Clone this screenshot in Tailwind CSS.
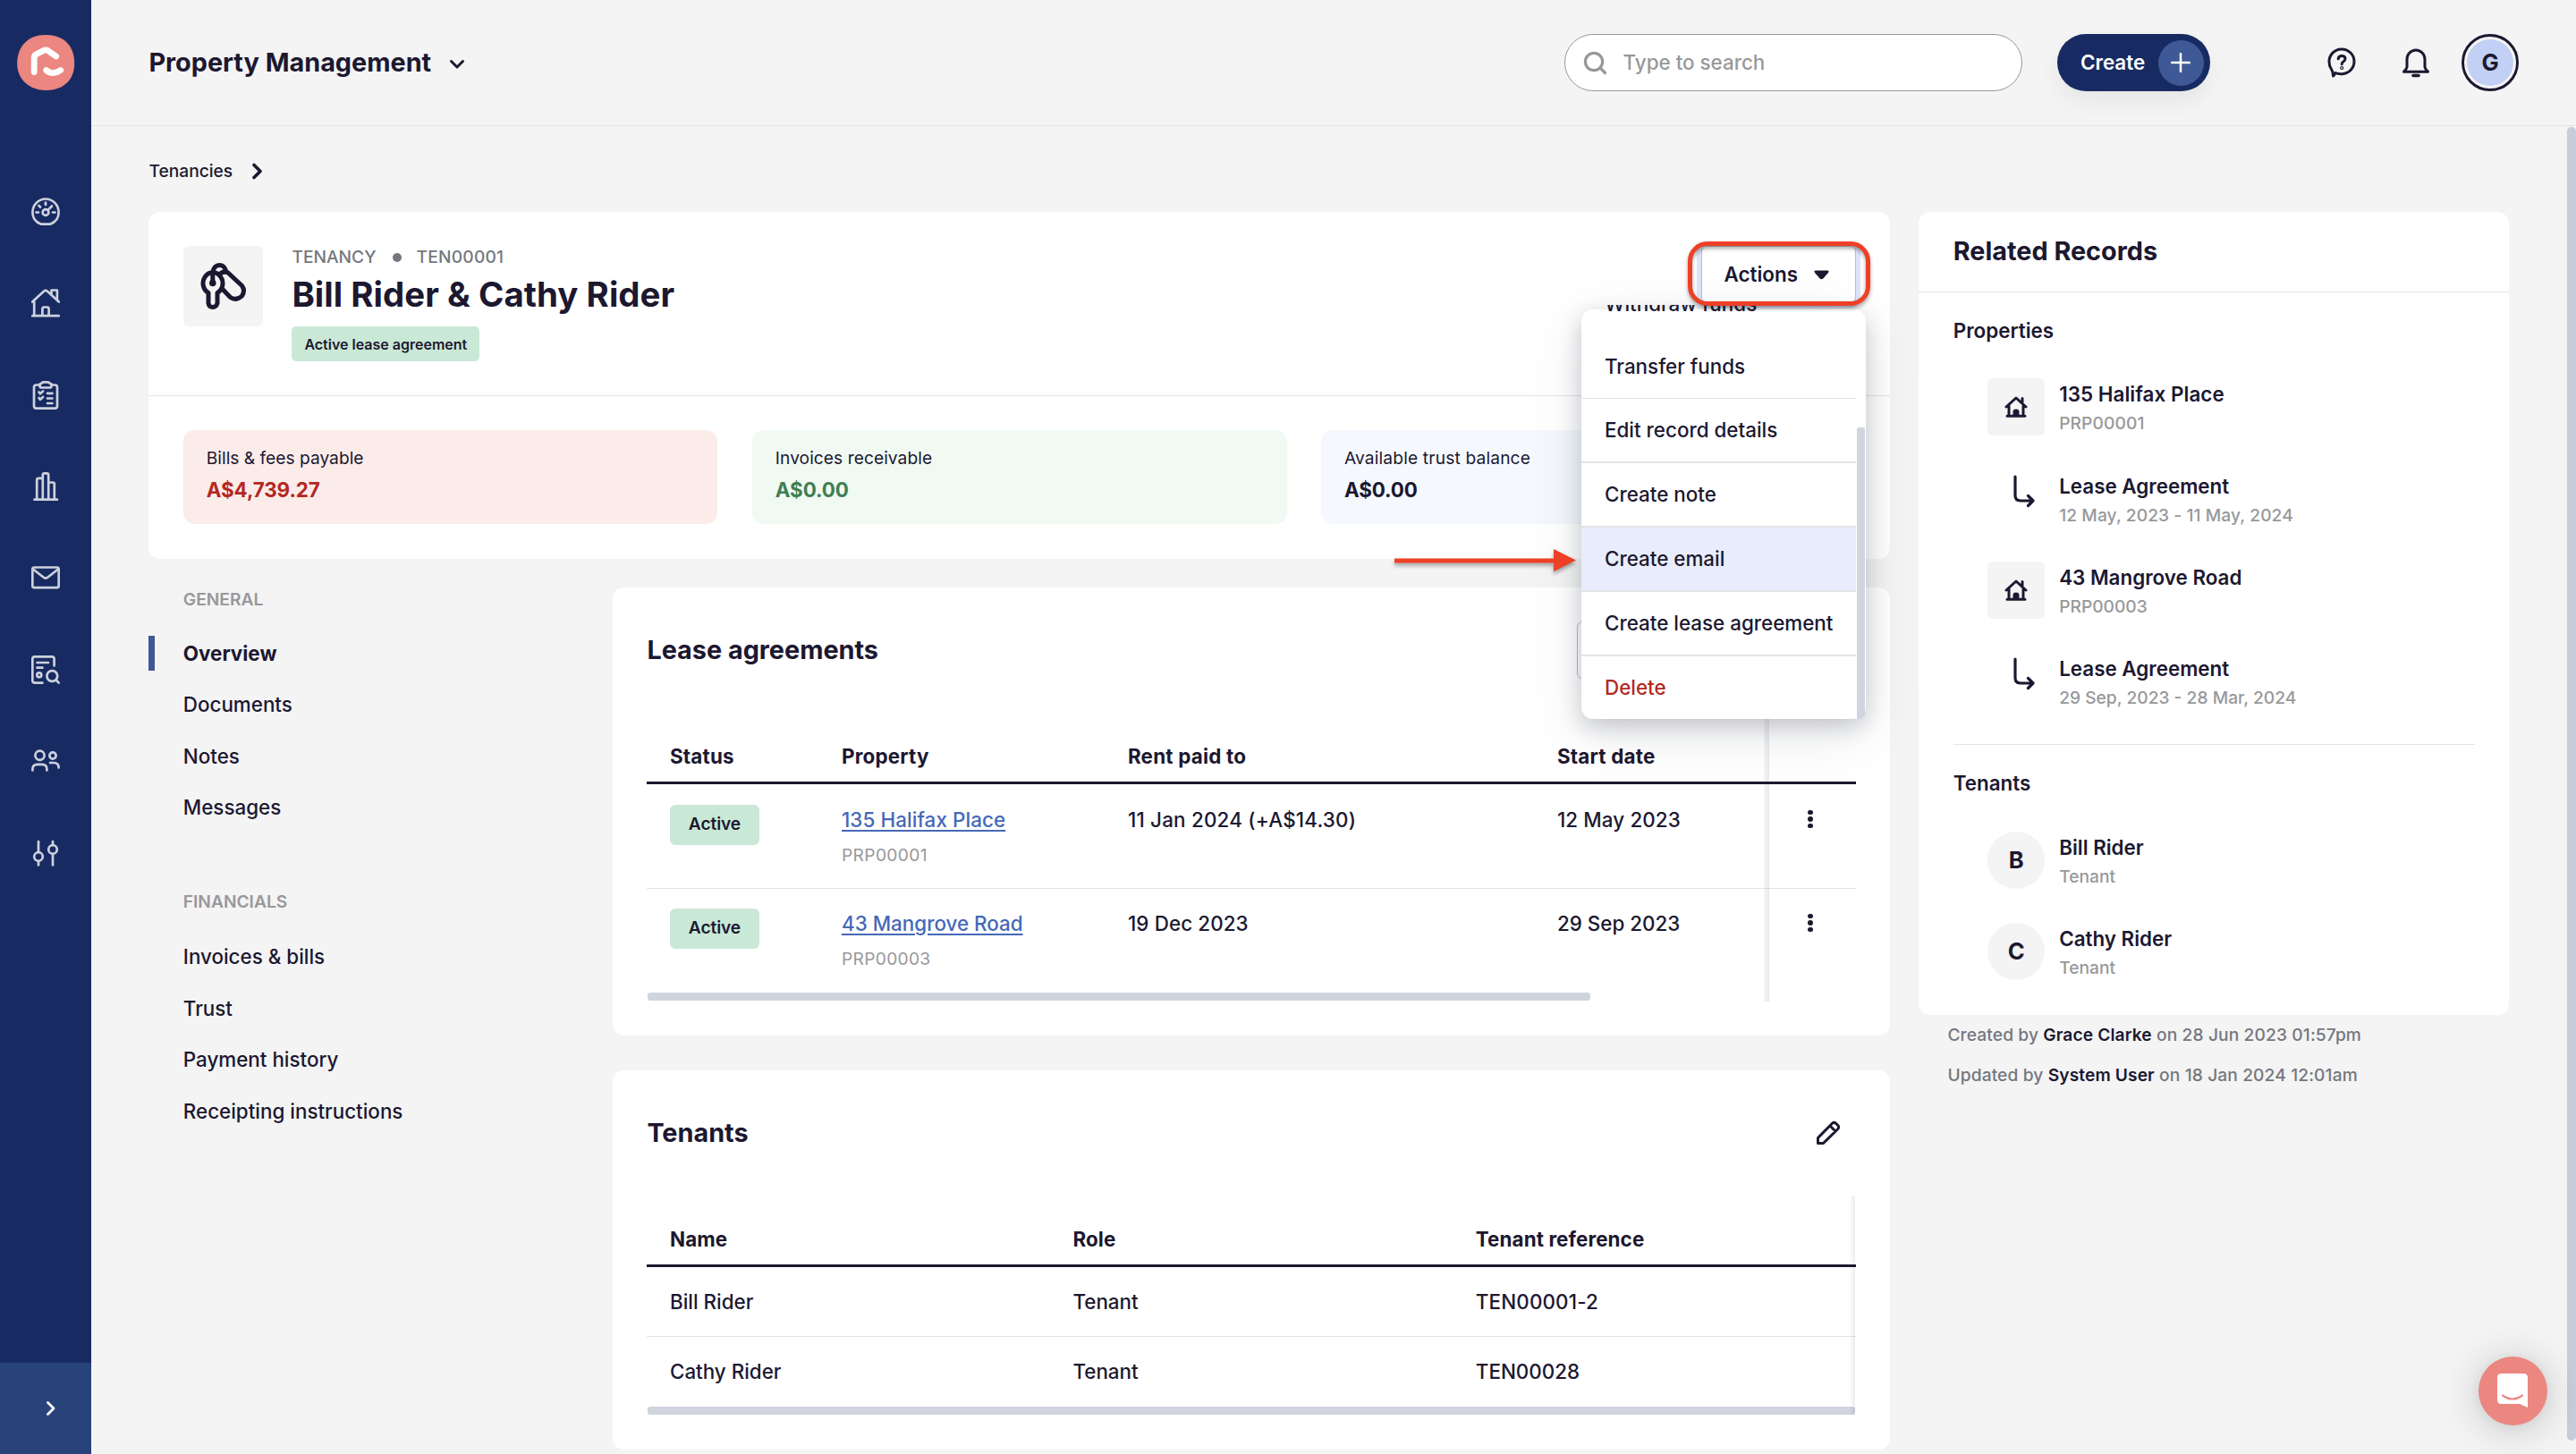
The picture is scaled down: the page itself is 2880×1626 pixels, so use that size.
<!DOCTYPE html>
<html lang="en" class="text-[25.6px]">
<head>
<meta charset="utf-8">
<title>Property Management</title>
<script src="https://cdn.jsdelivr.net/npm/@tailwindcss/browser@4"></script>
</head>
<body class="relative flex h-[1626px] w-[2880px] overflow-hidden bg-[#f4f4f4] font-['Inter',sans-serif] text-[#1c1830]">

<!-- Sidebar -->
<aside class="flex h-full w-16 shrink-0 flex-col bg-[#172b62]">
  <div class="flex h-29 justify-center pt-[39px]">
    <svg class="h-[62px] w-16" viewBox="0 0 64 62" fill="none">
      <path d="M32 0C52 0 64 12 64 32C64 50 52 62 32 62C14 62 0 50 0 32C0 13 12 0 32 0Z" fill="#eb8681"/>
      <path d="M19 41.500V26Q19 23 21.500 21.500L29.500 17.500Q32 16.300 34.500 17.700L43.500 24" stroke="#fff" stroke-width="6.800" stroke-linecap="round" stroke-linejoin="round"/>
      <path d="M32.500 39.500Q36 43 41 42.500Q45 42 48.500 39.500" stroke="#fff" stroke-width="6.800" stroke-linecap="round"/>
    </svg>
  </div>
  <nav class="flex flex-col pr-px text-[#cdd1dd]">
    <a class="flex h-16 items-center justify-center">
      <svg class="size-[32px]" viewBox="0 0 32 32" fill="none" stroke="currentColor" stroke-width="2.700" stroke-linecap="round">
        <path d="M11 29.700C5 27.500 1.400 22.500 1.400 16.500A14.600 15 0 0 1 30.600 16.500C30.600 22.500 27 27.500 21 29.700Z" stroke-linejoin="round"/>
        <circle cx="16" cy="16.500" r="3.400"/><path d="M18.600 13.900L23 9.500M16 5.500V8M5.500 16.500H8M24 16.500H26.500M8.500 9L10 10.500"/>
      </svg>
    </a>
    <a class="flex h-16 items-center justify-center">
      <svg class="size-[32px]" viewBox="0 0 32 32" fill="none" stroke="currentColor" stroke-width="2.700" stroke-linecap="round" stroke-linejoin="round">
        <path d="M1.200 14.500L14 2.700Q16 1 18 2.700L30.800 14.500M3.200 13.500V30M28.900 13V1.500H22.500V6.500M1.300 30.200H30.700M12.400 30V22.500Q12.400 20.500 14.400 20.500H17.600Q19.600 20.500 19.600 22.500V30"/>
      </svg>
    </a>
    <a class="flex h-16 items-center justify-center">
      <svg class="size-[32px]" viewBox="0 0 32 32" fill="none" stroke="currentColor" stroke-width="2.700" stroke-linecap="round" stroke-linejoin="round">
        <path d="M9 4.500H5.500Q3 4.500 3 7V28Q3 30.600 5.500 30.600H26.500Q29 30.600 29 28V7Q29 4.500 26.500 4.500H23"/>
        <path d="M9.500 4Q9.500 3 11 3Q12 1.300 14 1.300H18Q20 1.300 21 3Q22.500 3 22.500 4V5.500Q22.500 7.500 20.500 7.500H11.500Q9.500 7.500 9.500 5.500Z"/>
        <path d="M8.500 12.500L10 14.300L13 11.500M8.500 19L10 20.800L13 18M18 13.800H23.500M18 19.500H23.500M18 25H23.500"/>
      </svg>
    </a>
    <a class="flex h-16 items-center justify-center">
      <svg class="size-[32px]" viewBox="0 0 32 32" fill="none" stroke="currentColor" stroke-width="2.700" stroke-linecap="round" stroke-linejoin="round">
        <path d="M3.500 30.700H29M6.200 30V8.500Q6.200 6.800 8 6.800H12.500M12.800 30V3Q12.800 1.400 14.500 1.400H17.500Q19.200 1.400 19.200 3V30M19.500 11.500H24Q25.800 11.500 25.800 13.200V30"/>
      </svg>
    </a>
    <a class="flex h-16 items-center justify-center">
      <svg class="size-[32px]" viewBox="0 0 32 32" fill="none" stroke="currentColor" stroke-width="2.700" stroke-linecap="round" stroke-linejoin="round">
        <rect x="1.300" y="4.500" width="29.400" height="22.600" rx="2"/><path d="M2 6.500L13.500 15.500Q16 17.500 18.500 15.500L30 6.500"/>
      </svg>
    </a>
    <a class="flex h-16 items-center justify-center">
      <svg class="size-[32px]" viewBox="0 0 32 32" fill="none" stroke="currentColor" stroke-width="2.700" stroke-linecap="round" stroke-linejoin="round">
        <path d="M12.500 30.600H4Q1.300 30.600 1.300 28V4Q1.300 1.400 4 1.400H23Q25.600 1.400 25.600 4V11.500M6.500 8H19M6.500 13.700H12.500"/>
        <circle cx="8.800" cy="21.800" r="2.500"/><circle cx="23.300" cy="23" r="5.900"/><path d="M27.700 27.500L30.700 30.600"/>
      </svg>
    </a>
    <a class="flex h-16 items-center justify-center">
      <svg class="size-[32px]" viewBox="0 0 32 32" fill="none" stroke="currentColor" stroke-width="2.700" stroke-linecap="round" stroke-linejoin="round">
        <circle cx="9.500" cy="9.800" r="5.100"/><circle cx="24" cy="10" r="3.600"/>
        <path d="M1.400 26.500V25Q1.400 19.800 6.800 19.800H12Q17.400 19.800 17.400 25V26.500M21 18H25Q30.600 18 30.600 23.500"/>
      </svg>
    </a>
    <a class="flex h-16 items-center justify-center">
      <svg class="size-[32px]" viewBox="0 0 32 32" fill="none" stroke="currentColor" stroke-width="2.700" stroke-linecap="round">
        <circle cx="8" cy="20" r="4.800"/><circle cx="24" cy="12" r="4.800"/>
        <path d="M8 3V15M8 25V29.500M24 3V7M24 17V29.500"/>
      </svg>
    </a>
  </nav>
  <div class="mt-auto flex h-16 items-center justify-center bg-[#284379] pl-[11px]">
    <svg class="h-[18px] w-[12px]" viewBox="0 0 12 18" fill="none" stroke="#fff" stroke-width="2.800" stroke-linecap="round" stroke-linejoin="round"><path d="M2.500 2.500L9 9L2.500 15.500"/></svg>
  </div>
</aside>

<div class="flex min-w-0 flex-1 flex-col">
  <!-- Top bar -->
  <header class="flex h-22 shrink-0 items-center border-b border-[#e5e5e6] px-10 pt-[0.6px]">
    <h1 class="pt-px text-lg font-bold whitespace-nowrap">Property Management</h1>
    <svg class="mt-[3px] ml-[20px] h-[12px] w-[18px]" viewBox="0 0 18 12" fill="none" stroke="currentColor" stroke-width="3" stroke-linecap="round" stroke-linejoin="round"><path d="M2.500 2.500L9 9L15.500 2.500"/></svg>

    <div class="ml-auto flex h-10 w-80 items-center rounded-full border border-[#979899] bg-white pl-[20px] text-[#97989a]">
      <svg class="size-[27px]" viewBox="0 0 27 27" fill="none" stroke="currentColor" stroke-width="3.200" stroke-linecap="round"><circle cx="12" cy="12" r="9.600"/><path d="M19 19L24.500 24.500"/></svg>
      <span class="ml-[18px] text-sm font-medium">Type to search</span>
    </div>
    <button class="ml-[39.4px] flex h-10 w-[171px] items-center justify-between rounded-full bg-[#172b62] pr-[7px] pl-[26px] text-sm font-semibold text-white shadow-[0_12px_24px_rgba(0,0,0,0.06)]">
      Create
      <span class="flex size-8 items-center justify-center rounded-full bg-[#3f5896]">
        <svg class="size-[22px]" viewBox="0 0 22 22" stroke="#fff" stroke-width="2.500" stroke-linecap="round"><path d="M11 1V21M1 11H21"/></svg>
      </span>
    </button>
    <svg class="ml-[130px] h-[34px] w-[34px]" viewBox="0 0 34 34" fill="none" stroke="currentColor" stroke-width="3" stroke-linecap="round" stroke-linejoin="round">
      <path d="M10 28.500Q13 30 17.500 29.700A14 13.900 0 1 0 3 16Q3 21 5.500 24.300Q7.500 27 7.500 32Q9 31 10 28.500Z"/>
      <path d="M13.200 12.800Q13.500 9.500 17.200 9.500Q21 9.500 21 12.800Q21 14.800 18.800 16Q17.200 17 17.200 18.800"/><circle cx="17.200" cy="23" r=".6"/>
    </svg>
    <svg class="ml-[50px] h-[34px] w-[32px]" viewBox="0 0 32 34" fill="none" stroke="currentColor" stroke-width="3" stroke-linejoin="round">
      <path d="M6 22V13.500A10 10.500 0 0 1 26 13.500V22Q26.500 24.500 29.500 27.200H2.500Q5.500 24.500 6 22Z"/><path d="M13 31.500H19" stroke-width="3.600" stroke-linecap="round"/>
    </svg>
    <div class="ml-[35px] flex size-10 items-center justify-center rounded-full border-[3px] border-[#1c1830] p-[3px]">
      <span class="flex size-full items-center justify-center rounded-full bg-[#c1d0f4] text-[25.6px] font-bold">G</span>
    </div>
  </header>

  <main class="px-10">
    <div class="flex h-[96.2px] items-center pt-[6px]">
      <span class="text-xs font-medium">Tenancies</span>
      <svg class="ml-[21px] h-[19px] w-[13px]" viewBox="0 0 13 19" fill="none" stroke="currentColor" stroke-width="3.600" stroke-linecap="round" stroke-linejoin="round"><path d="M3 2.500L10 9.500L3 16.500"/></svg>
    </div>

    <div class="grid grid-cols-[1946.6px_660px] items-start gap-x-[32.4px]">
      <div class="flex flex-col gap-5">
        <!-- Tenancy summary -->
        <section class="rounded-[12.8px] bg-white">
          <div class="flex h-[206px] items-start border-b border-[#e3e4e5] px-6 pt-6">
            <div class="flex size-14 shrink-0 items-center justify-center rounded-[6px] bg-[#f4f4f4]">
              <svg class="ml-px h-[52px] w-[52px]" viewBox="0 0 52 52" fill="none" stroke="currentColor" stroke-width="5" stroke-linecap="round" stroke-linejoin="round">
                <path d="M9 45V33.500A11 12 0 1 1 19 33.500V45Q18 49.500 13.800 49.500Q9.500 49.500 9 45"/>
                <path d="M13.800 22V11Q15 2.500 21.500 2.500Q26.500 2.500 28.500 8.500"/>
                <circle cx="13.800" cy="22.500" r="1.300"/>
                <path d="M21 13.500Q25 8.500 31 11L46.500 25.500Q50.500 31 46.500 37Q40 43 33.500 38.500L24.500 29"/>
              </svg>
            </div>
            <div class="ml-5 flex flex-col items-start">
              <div class="flex h-[24px] items-center pt-px text-xs font-medium text-[#74777e]">
                TENANCY<span class="mr-[17px] ml-[18px] size-[10px] rounded-full bg-[#74777e]"></span><span class="tracking-[0.2px]">TEN00001</span>
              </div>
              <h2 class="text-2xl leading-[60px] font-bold tracking-[0.05px]">Bill Rider &amp; Cathy Rider</h2>
              <span class="mt-[6px] flex h-6 items-center rounded-[5px] bg-[#cae8d6] px-[14px] text-[16px] font-semibold">Active lease agreement</span>
            </div>
            <button class="ml-auto flex h-10 w-[173px] items-center rounded-[6px] border border-[#b9bdc9] bg-white pl-[25px] text-sm font-semibold shadow-[0_0_0_5px_#dce3fa]">
              Actions
              <svg class="ml-[18px] h-[11px] w-[17px]" viewBox="0 0 17 11" fill="currentColor"><path d="M2 0.500H15Q17.500 0.800 16 3L10.300 9.500Q8.500 11 6.700 9.500L1 3Q-0.500 0.800 2 0.500Z"/></svg>
            </button>
          </div>
          <div class="grid grid-cols-3 gap-6 p-6 pt-[38.4px]">
            <div class="h-[105px] rounded-[12.8px] bg-[#fbecea] px-[26px] pt-[13px] leading-[36px]">
              <p class="text-xs/[36px]">Bills &amp; fees payable</p>
              <p class="text-sm/[36px] font-bold tracking-[-0.1px] text-[#b4281f]">A$4,739.27</p>
            </div>
            <div class="h-[105px] rounded-[12.8px] bg-[#f0faf3] px-[26px] pt-[13px] leading-[36px]">
              <p class="text-xs/[36px] tracking-[0.05px]">Invoices receivable</p>
              <p class="text-sm/[36px] font-bold tracking-[-0.1px] text-[#3f7f50]">A$0.00</p>
            </div>
            <div class="h-[105px] rounded-[12.8px] bg-[#f5f9fe] px-[26px] pt-[13px] leading-[36px]">
              <p class="text-xs/[36px] tracking-[0.15px]">Available trust balance</p>
              <p class="text-sm/[36px] font-bold tracking-[-0.1px]">A$0.00</p>
            </div>
          </div>
        </section>

        <div class="flex items-start">
          <!-- Section navigation -->
          <nav class="w-[518.6px] shrink-0 pt-px text-sm font-medium">
            <h3 class="pl-6 text-xs/[24px] font-semibold text-[#97989a]">GENERAL</h3>
            <a class="mt-[20px] flex h-9 items-center font-bold"><span class="h-6 w-[7px] bg-[#3f5896]"></span><span class="pl-[31.4px]">Overview</span></a>
            <a class="flex h-9 items-center pl-6">Documents</a>
            <a class="flex h-9 items-center pl-6">Notes</a>
            <a class="flex h-9 items-center pl-6">Messages</a>
            <h3 class="mt-10 pl-6 text-xs/[24px] font-semibold text-[#97989a]">FINANCIALS</h3>
            <a class="mt-[21px] flex h-9 items-center pl-6">Invoices &amp; bills</a>
            <a class="flex h-9 items-center pl-6">Trust</a>
            <a class="flex h-9 items-center pl-6">Payment history</a>
            <a class="flex h-9 items-center pl-6">Receipting instructions</a>
          </nav>

          <div class="flex flex-1 flex-col gap-[39px]">
            <!-- Lease agreements -->
            <section class="h-[501px] rounded-[12.8px] bg-white px-6">
              <div class="flex h-[140px] items-center justify-between">
                <h2 class="pt-[2px] text-lg font-bold">Lease agreements</h2>
                <button class="h-10 w-[312px] rounded-[6px] border border-[#b9bdc9] bg-white"></button>
              </div>
              <div class="relative text-sm font-medium">
                <div class="grid h-[80px] grid-cols-[192px_320px_480px_262px_1fr] items-center border-b-[3px] border-[#1c1830] pt-[22px] font-bold tracking-[0.2px]">
                  <span class="pl-4">Status</span><span class="pl-4">Property</span><span class="pl-4">Rent paid to</span><span class="pl-4">Start date</span>
                </div>
                <div class="grid h-[117px] grid-cols-[192px_320px_480px_262px_1fr] border-b border-[#e3e4e5] pt-[23px]">
                  <div class="pl-4"><span class="flex h-7 w-[100px] items-center justify-center rounded-[6px] bg-[#cae8d6] pb-px text-xs font-semibold tracking-[-0.1px]">Active</span></div>
                  <div class="pt-px pl-4"><a class="block leading-[32px] tracking-[0.08px] text-[#4568b8] underline decoration-2 underline-offset-[3px]">135 Halifax Place</a><p class="mt-[7px] text-xs/[32px] font-normal tracking-[0.35px] text-[#97989a]">PRP00001</p></div>
                  <div class="pt-px pl-4 leading-[32px] tracking-[0.2px]">11 Jan 2024 (+A$14.30)</div>
                  <div class="pt-px pl-4 leading-[32px] tracking-[0.1px]">12 May 2023</div>
                  <div class="flex flex-col items-center gap-[2px] pt-[6px] pr-[4px]"><i class="size-[5.500px] rounded-full bg-[#1c1830]"></i><i class="size-[5.500px] rounded-full bg-[#1c1830]"></i><i class="size-[5.500px] rounded-full bg-[#1c1830]"></i></div>
                </div>
                <div class="grid h-[116px] grid-cols-[192px_320px_480px_262px_1fr] pt-[22px]">
                  <div class="pl-4"><span class="flex h-7 w-[100px] items-center justify-center rounded-[6px] bg-[#cae8d6] text-xs font-semibold tracking-[-0.1px]">Active</span></div>
                  <div class="pt-px pl-4"><a class="block leading-[32px] text-[#4568b8] underline decoration-2 underline-offset-[3px]">43 Mangrove Road</a><p class="mt-[7px] text-xs/[32px] font-normal tracking-[0.3px] text-[#97989a]">PRP00003</p></div>
                  <div class="pt-px pl-4 leading-[32px] tracking-[0.1px]">19 Dec 2023</div>
                  <div class="pt-px pl-4 leading-[32px]">29 Sep 2023</div>
                  <div class="flex flex-col items-center gap-[2px] pt-[6px] pr-[4px]"><i class="size-[5.500px] rounded-full bg-[#1c1830]"></i><i class="size-[5.500px] rounded-full bg-[#1c1830]"></i><i class="size-[5.500px] rounded-full bg-[#1c1830]"></i></div>
                </div>
                <div class="ml-px h-[9px] w-[1054px] rounded-[3px] bg-[#d0d4df]"></div>
                <!-- pinned column edge -->
                <div class="absolute top-0 right-[97px] h-[323px] w-[6px] bg-linear-to-r from-[#1c1830]/4 to-[#1c1830]/10"></div>
              </div>
            </section>

            <!-- Tenants -->
            <section class="h-[424px] rounded-[12.8px] bg-white px-6">
              <div class="flex h-[140px] items-center justify-between pr-[17px]">
                <h2 class="pt-px text-lg font-bold">Tenants</h2>
                <svg class="size-[28px]" viewBox="0 0 28 28" fill="none" stroke="currentColor" stroke-width="3" stroke-linejoin="round"><path d="M2.500 25.500V19.500L18.500 3.200Q20.500 1.500 22.500 3.200L24.800 5.500Q26.500 7.500 24.800 9.500L8.500 25.500ZM16 6L22 12"/></svg>
              </div>
              <div class="relative text-sm font-medium">
                <div class="grid h-[80px] grid-cols-3 items-center border-b-[3px] border-[#1c1830] pt-[21px] font-bold tracking-[0.1px]">
                  <span class="pl-4">Name</span><span class="pl-4">Role</span><span class="pl-4">Tenant reference</span>
                </div>
                <div class="grid h-[78px] grid-cols-3 items-center border-b border-[#e3e4e5] pt-px">
                  <span class="pl-4">Bill Rider</span><span class="pl-4">Tenant</span><span class="pl-4 tracking-[0.15px]">TEN00001-2</span>
                </div>
                <div class="grid h-[78px] grid-cols-3 items-center">
                  <span class="pl-4">Cathy Rider</span><span class="pl-4">Tenant</span><span class="pl-4">TEN00028</span>
                </div>
                <div class="mx-px h-[9px] rounded-[3px] bg-[#d0d4df]"></div>
                <div class="absolute top-0 right-px h-[246px] w-[5px] bg-linear-to-r from-[#1c1830]/2 to-[#1c1830]/8"></div>
              </div>
            </section>
          </div>
        </div>
      </div>

      <!-- Related records -->
      <aside>
        <section class="h-[898px] rounded-[12.8px] bg-white">
          <h2 class="flex h-14 items-center border-b border-[#e3e4e5] px-6 text-lg font-bold">Related Records</h2>
          <div class="px-6 pt-[27px] text-sm font-semibold">
            <h3 class="leading-[32px]">Properties</h3>
            <div class="mt-[37.600px] flex flex-col gap-6 pl-6">
              <div class="flex h-10">
                <span class="flex size-10 items-center justify-center rounded-[6px] bg-[#f4f4f4]">
                  <svg class="h-[24px] w-[26px]" viewBox="0 0 26 24" fill="none" stroke="currentColor" stroke-width="3" stroke-linecap="round" stroke-linejoin="round"><path d="M2 12L13 2L24 12M5 10.500V22M21 10.500V22M3 22.300H23M20 7V2.500"/><path d="M11 21V17.500Q11 16 13 16Q15 16 15 17.500V21Z" fill="currentColor"/></svg>
                </span>
                <div class="pl-[16px]"><p class="leading-[35px] tracking-[0.05px]">135 Halifax Place</p><p class="text-xs/[31px] font-medium tracking-[0.1px] text-[#97989a]">PRP00001</p></div>
              </div>
              <div class="flex h-10">
                <span class="flex w-10 justify-end pt-[5px] pr-[11px]"><svg class="h-[37px] w-[24px]" viewBox="0 0 24 37" fill="none" stroke="currentColor" stroke-width="3.200" stroke-linecap="round" stroke-linejoin="round"><path d="M2 2V23Q2 29 8 29H21.500M16.500 23.500L22 29L16.500 34.500"/></svg></span>
                <div class="pl-[16px]"><p class="leading-[35px]">Lease Agreement</p><p class="text-xs/[31px] font-medium tracking-[0.08px] text-[#97989a]">12 May, 2023 - 11 May, 2024</p></div>
              </div>
              <div class="flex h-10">
                <span class="flex size-10 items-center justify-center rounded-[6px] bg-[#f4f4f4]">
                  <svg class="h-[24px] w-[26px]" viewBox="0 0 26 24" fill="none" stroke="currentColor" stroke-width="3" stroke-linecap="round" stroke-linejoin="round"><path d="M2 12L13 2L24 12M5 10.500V22M21 10.500V22M3 22.300H23M20 7V2.500"/><path d="M11 21V17.500Q11 16 13 16Q15 16 15 17.500V21Z" fill="currentColor"/></svg>
                </span>
                <div class="pl-[16px]"><p class="leading-[35px]">43 Mangrove Road</p><p class="text-xs/[31px] font-medium text-[#97989a]">PRP00003</p></div>
              </div>
              <div class="flex h-10">
                <span class="flex w-10 justify-end pt-[5px] pr-[11px]"><svg class="h-[37px] w-[24px]" viewBox="0 0 24 37" fill="none" stroke="currentColor" stroke-width="3.200" stroke-linecap="round" stroke-linejoin="round"><path d="M2 2V23Q2 29 8 29H21.500M16.500 23.500L22 29L16.500 34.500"/></svg></span>
                <div class="pl-[16px]"><p class="leading-[35px]">Lease Agreement</p><p class="text-xs/[31px] font-medium text-[#97989a]">29 Sep, 2023 - 28 Mar, 2024</p></div>
              </div>
            </div>
            <div class="mt-[38px] border-t border-[#e3e4e5] pt-[27px]">
              <h3 class="leading-[32px]">Tenants</h3>
              <div class="mt-[37.600px] flex flex-col gap-6 pl-6">
                <div class="flex h-10">
                  <span class="flex size-10 items-center justify-center rounded-full bg-[#f4f4f4] text-[25.6px] font-bold">B</span>
                  <div class="pl-[16px]"><p class="leading-[35px]">Bill Rider</p><p class="text-xs/[31px] font-medium text-[#97989a]">Tenant</p></div>
                </div>
                <div class="flex h-10">
                  <span class="flex size-10 items-center justify-center rounded-full bg-[#f4f4f4] text-[25.6px] font-bold">C</span>
                  <div class="pl-[16px]"><p class="leading-[35px]">Cathy Rider</p><p class="text-xs/[31px] font-medium text-[#97989a]">Tenant</p></div>
                </div>
              </div>
            </div>
          </div>
        </section>
        <div class="pl-5 text-xs/[45px] font-medium tracking-[0.11px] text-[#74777e]">
          <p>Created by <span class="font-semibold text-[#1c1830]">Grace Clarke</span> on 28 Jun 2023 01:57pm</p>
          <p>Updated by <span class="font-semibold text-[#1c1830]">System User</span> on 18 Jan 2024 12:01am</p>
        </div>
      </aside>
    </div>
  </main>
</div>

<!-- Page scrollbar -->
<div class="absolute top-[142px] right-0 h-[1469px] w-[10px] rounded-full bg-[#c9ccd9]"></div>

<!-- Actions menu -->
<div class="absolute top-[346px] left-[1768px] flex h-[458px] w-[318px] rounded-[12.8px] bg-white shadow-[0_8px_24px_rgba(20,25,45,0.2),0_16px_64px_rgba(20,25,45,0.1)]">
  <div class="-mt-[5px] flex w-[307px] flex-col justify-end overflow-hidden rounded-bl-[12.8px] text-sm font-medium">
    <a class="flex h-[73px] shrink-0 items-center pt-[6px] pl-[26px]">Withdraw funds</a>
    <a class="flex h-[73px] shrink-0 items-center border-b border-[#e3e4e5] pt-px pl-[26px]">Transfer funds</a>
    <a class="flex h-[72px] shrink-0 items-center border-b-2 border-[#e3e4e7] pl-[26px]">Edit record details</a>
    <a class="flex h-[72px] shrink-0 items-center border-b-2 border-[#e3e4e7] pl-[26px]">Create note</a>
    <a class="flex h-[72px] shrink-0 items-center border-b-2 border-[#e3e4e7] bg-[#e9ecfb] pl-[26px]">Create email</a>
    <a class="flex h-[72px] shrink-0 items-center border-b-2 border-[#e3e4e7] pl-[26px]">Create lease agreement</a>
    <a class="flex h-[70px] shrink-0 items-center pl-[26px] text-[#b4281f]">Delete</a>
  </div>
  <div class="mt-[132px] ml-px w-[9px] rounded-t-[3px] rounded-br-[9px] rounded-bl-[3px] bg-[#d0d4df]"></div>
</div>

<!-- Callouts -->
<div class="absolute top-[270px] left-[1887px] h-[72px] w-[204px] rounded-[22px] border-[5px] border-[#ee4026] drop-shadow-[0_3px_2px_rgba(0,0,0,0.35)]"></div>
<svg class="absolute top-[612px] left-[1559px] h-[30px] w-[204px] drop-shadow-[0_3px_2px_rgba(0,0,0,0.35)]" viewBox="0 0 204 30" fill="#ee4026"><path d="M0 12.500H178V2L203 14.500L178 27V17.500H0Z"/></svg>

<!-- Chat launcher -->
<div class="absolute top-[1517px] left-[2771px] flex size-12 items-center justify-center rounded-full bg-[#eb8681] shadow-[0_4px_48px_rgba(0,0,0,0.2),0_2px_12px_rgba(0,0,0,0.06)]">
  <svg class="h-[38px] w-[34px]" viewBox="0 0 34 38" fill="#fff"><path d="M4.500 0H29.500Q34 0 34 4.500V38L25 34H4.500Q0 34 0 29.500V4.500Q0 0 4.500 0Z"/><path d="M6 24.500Q17 32.500 28 24.500" fill="none" stroke="#eb8681" stroke-width="2.200" stroke-linecap="round"/></svg>
</div>
</body>
</html>
